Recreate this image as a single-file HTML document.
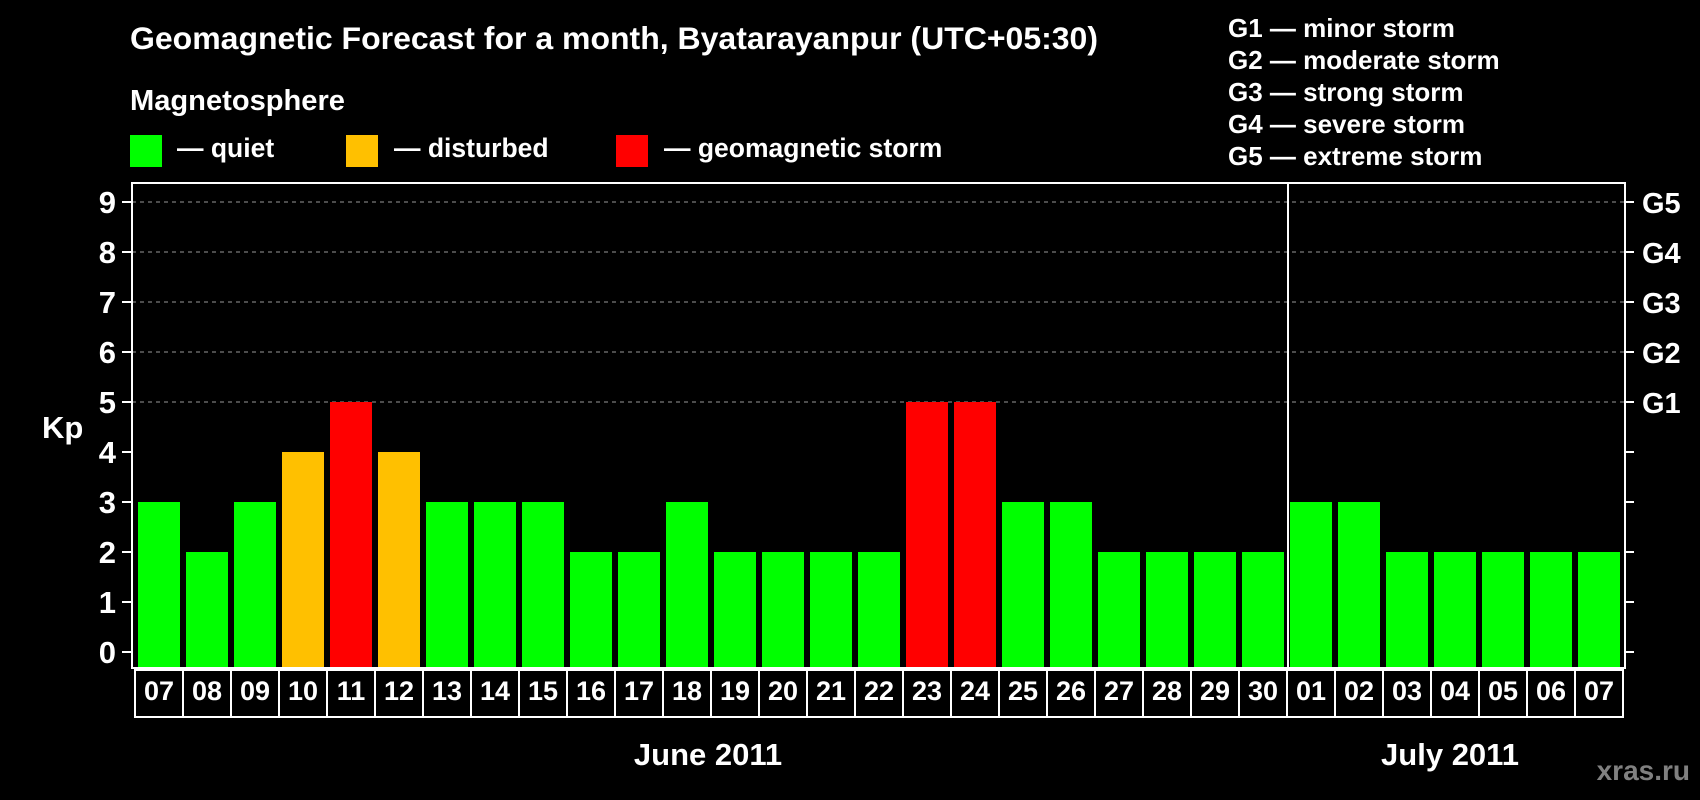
<!DOCTYPE html>
<html><head><meta charset="utf-8"><style>html,body{margin:0;padding:0;background:#000;}svg{display:block}</style></head>
<body>
<svg width="1700" height="800" xmlns="http://www.w3.org/2000/svg" font-family="Liberation Sans, Arial, sans-serif" font-weight="bold" fill="#fff">
<rect width="1700" height="800" fill="#000"/>
<text x="130" y="49" font-size="31.5" textLength="968" lengthAdjust="spacingAndGlyphs">Geomagnetic Forecast for a month, Byatarayanpur (UTC+05:30)</text>
<text x="130" y="110" font-size="29" textLength="215" lengthAdjust="spacingAndGlyphs">Magnetosphere</text>
<rect x="130" y="135" width="32" height="32" fill="#00ff00"/>
<text x="177" y="157" font-size="26.5">— quiet</text>
<rect x="346" y="135" width="32" height="32" fill="#ffc000"/>
<text x="394" y="157" font-size="26.5">— disturbed</text>
<rect x="616" y="135" width="32" height="32" fill="#ff0000"/>
<text x="664" y="157" font-size="26.5">— geomagnetic storm</text>
<g font-size="26">
<text x="1228" y="37">G1 — minor storm</text>
<text x="1228" y="69">G2 — moderate storm</text>
<text x="1228" y="101">G3 — strong storm</text>
<text x="1228" y="133">G4 — severe storm</text>
<text x="1228" y="165">G5 — extreme storm</text>
</g>
<g stroke="#999" stroke-width="1" stroke-dasharray="4,4">
<line x1="132" y1="202" x2="1625" y2="202"/>
<line x1="132" y1="252" x2="1625" y2="252"/>
<line x1="132" y1="302" x2="1625" y2="302"/>
<line x1="132" y1="352" x2="1625" y2="352"/>
<line x1="132" y1="402" x2="1625" y2="402"/>
</g>
<g id="bars"></g>
<g stroke="#fff" stroke-width="2" fill="none">
<rect x="132" y="183" width="1493" height="485"/>
<line x1="1288" y1="183" x2="1288" y2="668"/>
</g>
<g stroke="#fff" stroke-width="2">
<line x1="122" y1="202" x2="132" y2="202"/><line x1="122" y1="252" x2="132" y2="252"/><line x1="122" y1="302" x2="132" y2="302"/><line x1="122" y1="352" x2="132" y2="352"/><line x1="122" y1="402" x2="132" y2="402"/><line x1="122" y1="452" x2="132" y2="452"/><line x1="122" y1="502" x2="132" y2="502"/><line x1="122" y1="552" x2="132" y2="552"/><line x1="122" y1="602" x2="132" y2="602"/><line x1="122" y1="652" x2="132" y2="652"/>
<line x1="1625" y1="202" x2="1634" y2="202"/><line x1="1625" y1="252" x2="1634" y2="252"/><line x1="1625" y1="302" x2="1634" y2="302"/><line x1="1625" y1="352" x2="1634" y2="352"/><line x1="1625" y1="402" x2="1634" y2="402"/><line x1="1625" y1="452" x2="1634" y2="452"/><line x1="1625" y1="502" x2="1634" y2="502"/><line x1="1625" y1="552" x2="1634" y2="552"/><line x1="1625" y1="602" x2="1634" y2="602"/><line x1="1625" y1="652" x2="1634" y2="652"/>
</g>
<g font-size="31" text-anchor="end">
<text x="116" y="213">9</text><text x="116" y="263">8</text><text x="116" y="313">7</text><text x="116" y="363">6</text><text x="116" y="413">5</text><text x="116" y="463">4</text><text x="116" y="513">3</text><text x="116" y="563">2</text><text x="116" y="613">1</text><text x="116" y="663">0</text>
</g>
<text x="42" y="438" font-size="31">Kp</text>
<g font-size="29">
<text x="1642" y="213">G5</text><text x="1642" y="263">G4</text><text x="1642" y="313">G3</text><text x="1642" y="363">G2</text><text x="1642" y="413">G1</text>
</g>
<g id="dates" stroke="#fff" stroke-width="2" fill="none"></g>
<g id="dlabels" font-size="27" text-anchor="middle"></g>
<text x="708" y="765" font-size="31" text-anchor="middle">June 2011</text>
<text x="1450" y="765" font-size="31" text-anchor="middle">July 2011</text>
<text x="1690" y="780" font-size="28" text-anchor="end" fill="#808080">xras.ru</text>
</svg>
<script>
var v=[3,2,3,4,5,4,3,3,3,2,2,3,2,2,2,2,5,5,3,3,2,2,2,2,3,3,2,2,2,2,2];
var d=['07','08','09','10','11','12','13','14','15','16','17','18','19','20','21','22','23','24','25','26','27','28','29','30','01','02','03','04','05','06','07'];
var ns='http://www.w3.org/2000/svg';
var b=document.getElementById('bars'),g=document.getElementById('dates'),l=document.getElementById('dlabels');
for(var i=0;i<31;i++){
 var r=document.createElementNS(ns,'rect');var y=652-50*v[i];
 r.setAttribute('x',138+48*i);r.setAttribute('y',y);r.setAttribute('width',42);r.setAttribute('height',668-y);
 r.setAttribute('fill',v[i]>=5?'#ff0000':v[i]==4?'#ffc000':'#00ff00');b.appendChild(r);
 var c=document.createElementNS(ns,'rect');c.setAttribute('x',135+48*i);c.setAttribute('y',670);c.setAttribute('width',48);c.setAttribute('height',47);g.appendChild(c);
 var t=document.createElementNS(ns,'text');t.setAttribute('x',159+48*i);t.setAttribute('y',700);t.textContent=d[i];l.appendChild(t);
}
</script>
</body></html>
